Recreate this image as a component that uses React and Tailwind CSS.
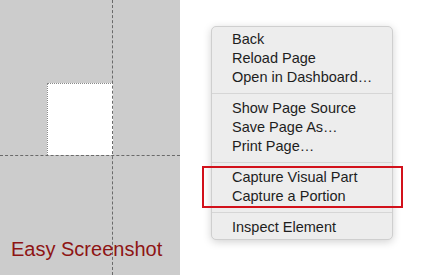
export default function App() {
  const groups = [
    ["Back", "Reload Page", "Open in Dashboard…"],
    ["Show Page Source", "Save Page As…", "Print Page…"],
    ["Capture Visual Part", "Capture a Portion"],
    ["Inspect Element"],
  ];
  return (
    <div className="relative flex w-[425px] h-[275px] overflow-hidden bg-white" style={{ fontFamily: '"Liberation Sans", Arial, sans-serif' }}>
      <div className="relative flex flex-col justify-end w-[180px] h-full bg-[#cccccc] pl-[11px] pb-[14px]">
        <div className="absolute left-[47px] top-[83px] w-[66px] h-[72px] bg-white border-t border-l border-dotted border-[#8a8a8a]" />
        <div className="absolute left-[112px] top-0 h-full border-l border-dashed border-[#6a6a6a]" />
        <div className="absolute left-0 top-[155px] w-full border-t border-dashed border-[#6a6a6a]" />
        <div className="relative text-[20px] leading-[24px] text-[#8e1414] whitespace-nowrap">Easy Screenshot</div>
      </div>
      <div className="absolute left-[211px] top-[26px] w-[182px] rounded-[5px] bg-[#ededed] border border-[#cfcfcf] shadow-[0_2px_8px_rgba(0,0,0,0.18)] pt-[3px] pb-[2px]">
        {groups.map((g, gi) => (
          <div key={gi} className="flex flex-col">
            {gi > 0 && (
              <div className="h-[12px] flex items-center">
                <div className="w-full h-px bg-[#d6d6d6]" />
              </div>
            )}
            {g.map((t) => (
              <div key={t} className="h-[19px] leading-[19px] pl-[20px] text-[14.5px] text-[#1e1e1e] whitespace-nowrap">
                {t}
              </div>
            ))}
          </div>
        ))}
      </div>
      <div className="absolute left-[202px] top-[166px] w-[201px] h-[42px] border-2 border-[#d2111b]" />
    </div>
  );
}
